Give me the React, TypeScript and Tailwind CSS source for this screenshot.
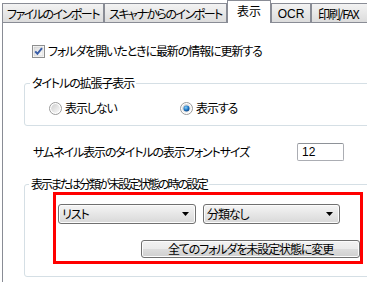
import clsx from 'clsx';

const tabBase =
  'flex items-center justify-center overflow-hidden whitespace-nowrap border border-b-0 border-[#898c95] text-[12px] leading-none tracking-[-1.5px]';

function Tab({ label, className, active }: { label: string; className: string; active?: boolean }) {
  return (
    <div
      className={clsx(
        tabBase,
        className,
        active
          ? 'h-[23px] -mb-px bg-white pb-[3px]'
          : 'h-[19px] bg-gradient-to-b from-[#f3f3f3] to-[#dcdcdc] pt-px'
      )}
    >
      {label}
    </div>
  );
}

function CheckBox() {
  return (
    <svg width="13" height="13" viewBox="0 0 13 13">
      <defs>
        <linearGradient id="cb" x1="0" y1="0" x2="1" y2="1">
          <stop offset="0" stopColor="#dcdcdc" />
          <stop offset="1" stopColor="#fbfbfb" />
        </linearGradient>
      </defs>
      <rect x="0.5" y="0.5" width="12" height="12" fill="#fff" stroke="#8e8f8f" />
      <rect x="2" y="2" width="9" height="9" fill="url(#cb)" stroke="#c9c9c9" strokeWidth="0.6" />
      <path d="M3.2 6.4 L5.4 8.8 L10 3.2" fill="none" stroke="#3a5ea8" strokeWidth="2" />
    </svg>
  );
}

function Radio({ checked }: { checked?: boolean }) {
  return (
    <svg width="13" height="13" viewBox="0 0 13 13">
      <defs>
        <linearGradient id="rb" x1="0" y1="0" x2="1" y2="1">
          <stop offset="0" stopColor="#cfcfcf" />
          <stop offset="1" stopColor="#fafafa" />
        </linearGradient>
        <radialGradient id="rd" cx="0.4" cy="0.35" r="0.7">
          <stop offset="0" stopColor="#8ad0f6" />
          <stop offset="0.6" stopColor="#1a73c4" />
          <stop offset="1" stopColor="#0d3f7a" />
        </radialGradient>
      </defs>
      <circle cx="6.5" cy="6.5" r="6" fill="#fff" stroke="#9a9a9a" />
      <circle cx="6.5" cy="6.5" r="4.4" fill="url(#rb)" />
      {checked && <circle cx="6.5" cy="6.5" r="3" fill="url(#rd)" />}
    </svg>
  );
}

function Arrow() {
  return (
    <svg width="7" height="4" viewBox="0 0 7 4">
      <path d="M0 0 H7 L3.5 4 Z" fill="#000" />
    </svg>
  );
}

function Combo({ value, className }: { value: string; className: string }) {
  return (
    <div
      className={clsx(
        'flex h-[20px] items-center justify-between rounded-[3px] border border-[#707070] bg-gradient-to-b from-[#f5f5f5] to-[#d8d8d8] pl-[3px] pr-[6px] shadow-[inset_0_0_0_1px_#fcfcfc]',
        className
      )}
    >
      <span>{value}</span>
      <Arrow />
    </div>
  );
}

export default function App() {
  return (
    <div className="relative h-[282px] w-[367px] overflow-hidden bg-white font-['Noto_Sans_CJK_JP',sans-serif] text-[12px] tracking-[-1.1px] text-black [font-feature-settings:'palt']">
      <div className="ml-[2px] flex h-[23px] w-[420px] items-end border-b border-[#898c95]">
        <Tab label="ファイルのインポート" className="w-[102px]" />
        <Tab label="スキャナからのインポート" className="w-[123px]" />
        <Tab label="表示" className="w-[44px] tracking-normal" active />
        <Tab label="OCR" className="w-[40px] font-['Liberation_Sans',sans-serif] tracking-normal" />
        <Tab label="印刷/FAX" className="w-[70px] justify-start pl-[6px] tracking-[-0.5px]" />
      </div>

      <div className="ml-[2px] h-[260px] w-[420px] border-l border-[#898c95] pl-[21px] pt-[21px]">
        <div className="flex h-[14px] items-center gap-[3px] pl-[8px]">
          <CheckBox />
          <span className="leading-none">フォルダを開いたときに最新の情報に更新する</span>
        </div>

        <fieldset className="mt-[18px] rounded-[3px] border border-[#d5dfe5] pb-[10px]">
          <legend className="ml-[5px] px-[2px] leading-[14px]">タイトルの拡張子表示</legend>
          <div className="mt-[11px] flex h-[14px] items-center pl-[24px]">
            <div className="flex w-[131px] items-center gap-[3px]">
              <Radio />
              <span className="leading-none">表示しない</span>
            </div>
            <div className="flex items-center gap-[3px]">
              <Radio checked />
              <span className="leading-none">表示する</span>
            </div>
          </div>
        </fieldset>

        <div className="mt-[17px] flex h-[18px] items-center pl-[9px]">
          <span className="w-[264px] leading-none">サムネイル表示のタイトルの表示フォントサイズ</span>
          <div className="flex h-[18px] w-[47px] items-center rounded-[2px] border border-[#abadb3] border-t-[#8e9298] pl-[4px] font-['Liberation_Sans',sans-serif] leading-none tracking-normal">
            12
          </div>
        </div>

        <fieldset className="mt-[16px] h-[100px] rounded-[3px] border border-[#d5dfe5]">
          <legend className="ml-[4px] px-[2px] leading-[14px] tracking-[-2.1px]">表示または分類が未設定状態の時の設定</legend>
          <div className="ml-[28px] mt-px flex h-[72px] w-[310px] flex-col border-[3px] border-[#ff0000] pl-[2px] pt-[9px]">
            <div className="flex gap-[7px]">
              <Combo value="リスト" className="w-[138px]" />
              <Combo value="分類なし" className="w-[137px]" />
            </div>
            <div className="mt-[16px] flex h-[18px] w-[219px] items-center justify-center self-end rounded-[3px] border border-[#707070] bg-[linear-gradient(#f2f2f2_0%,#ebebeb_50%,#dddddd_50%,#cfcfcf_100%)] leading-none shadow-[inset_0_0_0_1px_#fcfcfc]">
              全てのフォルダを未設定状態に変更
            </div>
          </div>
        </fieldset>
      </div>
    </div>
  );
}
